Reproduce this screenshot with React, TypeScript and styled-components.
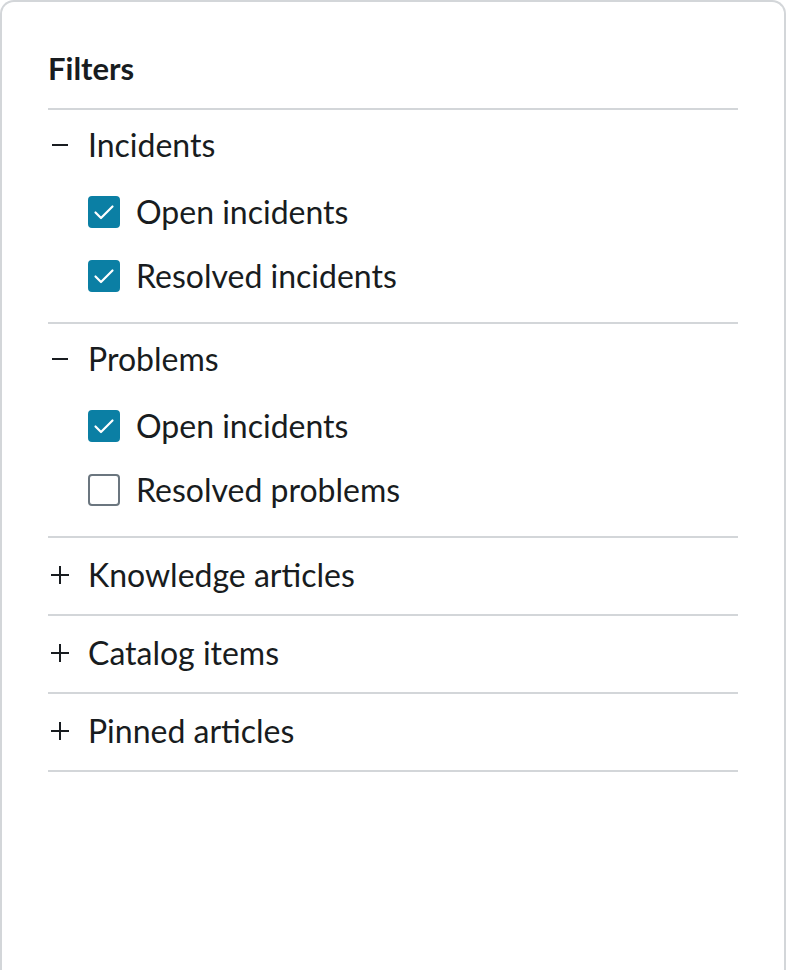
import React from 'react';
import styled, { createGlobalStyle } from 'styled-components';

const GlobalStyle = createGlobalStyle`
  html, body {
    margin: 0;
    padding: 0;
    background: #ffffff;
  }
  body {
    font-family: Lato, 'Noto Sans', sans-serif;
    color: #181c20;
  }
`;

const Card = styled.aside`
  box-sizing: border-box;
  width: 786px;
  min-height: 970px;
  border: 2px solid #d3d6d9;
  border-bottom: none;
  border-radius: 14px 14px 0 0;
  padding: 0 46px;
`;

const Title = styled.h2`
  margin: 0;
  padding: 48px 0 22px;
  font-size: 31px;
  line-height: 36px;
  font-weight: 700;
  border-bottom: 2px solid #d3d6d9;
`;

const Section = styled.section`
  border-bottom: 2px solid #d3d6d9;
`;

const Header = styled.button<{ $open: boolean }>`
  display: flex;
  align-items: center;
  gap: 16px;
  width: 100%;
  height: ${(p) => (p.$open ? 70 : 76)}px;
  padding: 0 0 ${(p) => (p.$open ? 0 : 3)}px;
  border: none;
  background: none;
  font: inherit;
  font-size: 32px;
  line-height: 38px;
  color: inherit;
  text-align: left;
  cursor: pointer;
`;

const Toggle = styled.span`
  display: flex;
  justify-content: center;
  width: 24px;
  flex: none;
`;

const List = styled.ul`
  list-style: none;
  margin: 0;
  padding: 0 0 14px 40px;
`;

const Row = styled.li`
  display: flex;
  align-items: center;
  gap: 16px;
  height: 64px;
  font-size: 32px;
  line-height: 38px;
`;

const Box = styled.span<{ $checked: boolean }>`
  box-sizing: border-box;
  display: flex;
  align-items: center;
  justify-content: center;
  width: 32px;
  height: 32px;
  flex: none;
  border-radius: 4px;
  background: ${(p) => (p.$checked ? '#0b7fa4' : '#ffffff')};
  border: 2px solid ${(p) => (p.$checked ? '#0b7fa4' : '#6b767f')};
`;

type Group = { name: string; open: boolean; items: { label: string; checked: boolean }[] };

const groups: Group[] = [
  {
    name: 'Incidents',
    open: true,
    items: [
      { label: 'Open incidents', checked: true },
      { label: 'Resolved incidents', checked: true },
    ],
  },
  {
    name: 'Problems',
    open: true,
    items: [
      { label: 'Open incidents', checked: true },
      { label: 'Resolved problems', checked: false },
    ],
  },
  { name: 'Knowledge articles', open: false, items: [] },
  { name: 'Catalog items', open: false, items: [] },
  { name: 'Pinned articles', open: false, items: [] },
];

const ToggleIcon = ({ open }: { open: boolean }) => (
  <svg width="18" height="18" viewBox="0 0 18 18" fill="none" stroke="#181c20" strokeWidth="2">
    <path d={open ? 'M1 9h16' : 'M0 9h18'} />
    {!open && <path d="M9 0v18" />}
  </svg>
);

const Check = () => (
  <svg width="28" height="28" viewBox="0 0 28 28" fill="none" stroke="#ffffff" strokeWidth="2.2" strokeLinecap="round" strokeLinejoin="round">
    <path d="M5.5 14.5l5.5 5.5 11.5-11.5" />
  </svg>
);

const App = () => {
  return (
    <>
      <GlobalStyle />
      <Card>
        <Title>Filters</Title>
        {groups.map((g) => (
          <Section key={g.name}>
            <Header $open={g.open}>
              <Toggle>
                <ToggleIcon open={g.open} />
              </Toggle>
              {g.name}
            </Header>
            {g.open && (
              <List>
                {g.items.map((it) => (
                  <Row key={it.label}>
                    <Box $checked={it.checked}>{it.checked && <Check />}</Box>
                    {it.label}
                  </Row>
                ))}
              </List>
            )}
          </Section>
        ))}
      </Card>
    </>
  );
};

export default App;
